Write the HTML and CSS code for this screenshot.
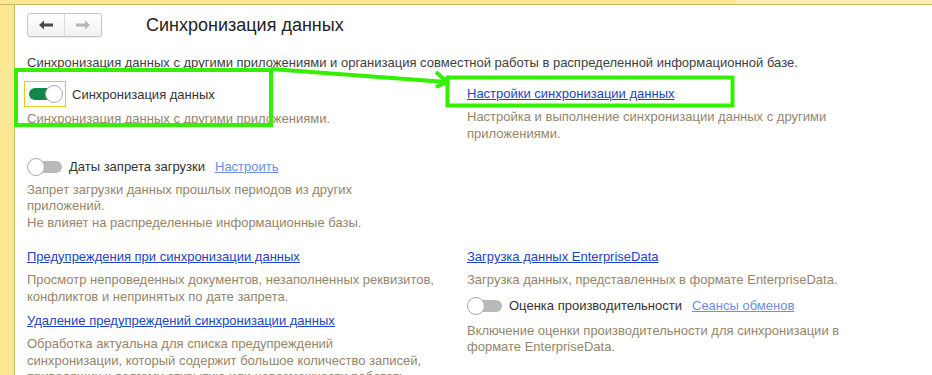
FILE: index.html
```html
<!DOCTYPE html>
<html lang="ru">
<head>
    <meta charset="UTF-8">
    <meta name="viewport" content="width=device-width, initial-scale=1.0">
    <title>Синхронизация данных</title>
    <link rel="stylesheet" href="styles.css">
</head>
<body>
    <div class="topbar">
        <div class="topbar-tab"></div>
        <div class="topbar-rest"></div>
    </div>
    <div class="main">
        <div class="sidebar"></div>
        <div class="content">
            <div class="header">
                <div class="nav">
                    <span class="nav-btn">
                        <svg width="16" height="12" viewBox="0 0 16 12"><path d="M1 6 L6 1.5 L6 4.5 L15 4.5 L15 7.5 L6 7.5 L6 10.5 Z" fill="#4a4a4a"/></svg>
                    </span>
                    <span class="nav-btn">
                        <svg width="16" height="12" viewBox="0 0 16 12"><path d="M15 6 L10 1.5 L10 4.5 L1 4.5 L1 7.5 L10 7.5 L10 10.5 Z" fill="#b4b4b4"/></svg>
                    </span>
                </div>
                <h1 class="title">Синхронизация данных</h1>
            </div>

            <p class="intro">Синхронизация данных с другими приложениями и организация совместной работы в распределенной информационной базе.</p>

            <div class="columns">
                <div class="col">
                    <div class="switch-row first">
                        <span class="focus"><span class="toggle on"></span></span>
                        <span class="label">Синхронизация данных</span>
                    </div>
                    <p class="hint tight">Синхронизация данных с другими приложениями.</p>

                    <div class="switch-row second">
                        <span class="toggle"></span>
                        <span class="label">Даты запрета загрузки</span>
                        <a class="link soft" href="#">Настроить</a>
                    </div>
                    <p class="hint">Запрет загрузки данных прошлых периодов из других<br>приложений.<br>Не влияет на распределенные информационные базы.</p>

                    <a class="link block gap-top" href="#">Предупреждения при синхронизации данных</a>
                    <p class="hint after-link">Просмотр непроведенных документов, незаполненных реквизитов, конфликтов и непринятых по дате запрета.</p>

                    <a class="link block" href="#">Удаление предупреждений синхронизации данных</a>
                    <p class="hint after-link">Обработка актуальна для списка предупреждений<br>синхронизации, который содержит большое количество записей,<br>приводящих к долгому открытию или невозможности работать.</p>
                </div>

                <div class="col">
                    <a class="link block first-link" href="#">Настройки синхронизации данных</a>
                    <p class="hint after-link">Настройка и выполнение синхронизации данных с другими приложениями.</p>

                    <a class="link block right-gap" href="#">Загрузка данных EnterpriseData</a>
                    <p class="hint after-link">Загрузка данных, представленных в формате EnterpriseData.</p>

                    <div class="switch-row third">
                        <span class="toggle"></span>
                        <span class="label">Оценка производительности</span>
                        <a class="link soft" href="#">Сеансы обменов</a>
                    </div>
                    <p class="hint loose">Включение оценки производительности для синхронизации в формате EnterpriseData.</p>
                </div>
            </div>
        </div>
    </div>

    <svg class="marks" width="932" height="375" viewBox="0 0 932 375">
        <rect x="16" y="70" width="255" height="55" fill="none" stroke="#33f000" stroke-width="4"/>
        <rect x="447.5" y="77.5" width="285" height="28" fill="none" stroke="#33f000" stroke-width="4"/>
        <path d="M271 69 L446 82" fill="none" stroke="#33f000" stroke-width="4"/>
        <path d="M436 72 L447 82 L436 87" fill="none" stroke="#33f000" stroke-width="4" stroke-linejoin="miter"/>
    </svg>
</body>
</html>
```

FILE: styles.css
```css
body {
    margin: 0;
    font-family: "Liberation Sans", Arial, sans-serif;
    font-size: 13px;
    color: #333;
    background: #fff;
    height: 375px;
    overflow: hidden;
    position: relative;
}

.topbar {
    display: flex;
    height: 4px;
    border-bottom: 1px solid #cdb862;
}
.topbar-tab {
    width: 737px;
    background: #fbe894;
}
.topbar-rest {
    flex: 1;
    background: #fdf0ae;
}

.main {
    display: flex;
    height: 370px;
}
.sidebar {
    width: 14px;
    background: #fbe894;
    border-right: 1px solid #cdb862;
    flex-shrink: 0;
}
.content {
    flex: 1;
    padding: 8px 0 0 12px;
}

.header {
    display: flex;
    align-items: center;
}
.nav {
    display: flex;
    border: 1px solid #c4c4c4;
    border-radius: 3px;
    background: linear-gradient(#fff, #f1f1f1);
    box-shadow: 0 1px 1px rgba(0, 0, 0, 0.08);
}
.nav-btn {
    width: 36px;
    height: 22px;
    display: flex;
    align-items: center;
    justify-content: center;
}
.nav-btn + .nav-btn {
    border-left: 1px solid #dcdcdc;
}
.title {
    margin: 0 0 0 44px;
    font-size: 18px;
    font-weight: normal;
    color: #222;
}

.intro {
    margin: 18px 0 0 0;
    color: #404040;
}

.columns {
    display: grid;
    grid-template-columns: 440px 420px;
}

.switch-row {
    display: flex;
    align-items: center;
}
.switch-row.first {
    margin-top: 11px;
    margin-left: -3px;
}
.switch-row.second {
    margin-top: 30px;
}
.switch-row.third {
    margin-top: 2px;
}
.focus {
    border: 1px solid #f4c51b;
    padding: 3px 2px;
    display: flex;
}
.toggle {
    position: relative;
    width: 36px;
    height: 18px;
    display: inline-block;
}
.toggle::before {
    content: "";
    position: absolute;
    left: 2px;
    right: 1px;
    top: 3px;
    height: 12px;
    border-radius: 6px;
    background: #b9b9b9;
}
.toggle::after {
    content: "";
    position: absolute;
    left: 0;
    top: 0;
    width: 16px;
    height: 16px;
    border-radius: 50%;
    background: #fff;
    border: 1px solid #a8a8a8;
}
.toggle.on::before {
    background: #12874a;
}
.toggle.on::after {
    left: 18px;
}

.label {
    margin-left: 6px;
    color: #333;
}
.link {
    color: #1c44c4;
    text-decoration: underline;
}
.link.soft {
    color: #6d8ee0;
    margin-left: 10px;
}
.link.block {
    display: block;
    width: fit-content;
}
.first-link {
    margin-top: 16px;
}
.gap-top {
    margin-top: 18px;
}
.right-gap {
    margin-top: 107px;
}

.hint {
    margin: 6px 0 8px 0;
    line-height: 16.5px;
    color: #95856a;
    max-width: 410px;
}
.hint.tight {
    margin-top: 4px;
}
.hint.after-link {
    margin-top: 8px;
}
.hint.loose {
    margin-top: 8px;
}

.marks {
    position: absolute;
    left: 0;
    top: 0;
    pointer-events: none;
}
```
